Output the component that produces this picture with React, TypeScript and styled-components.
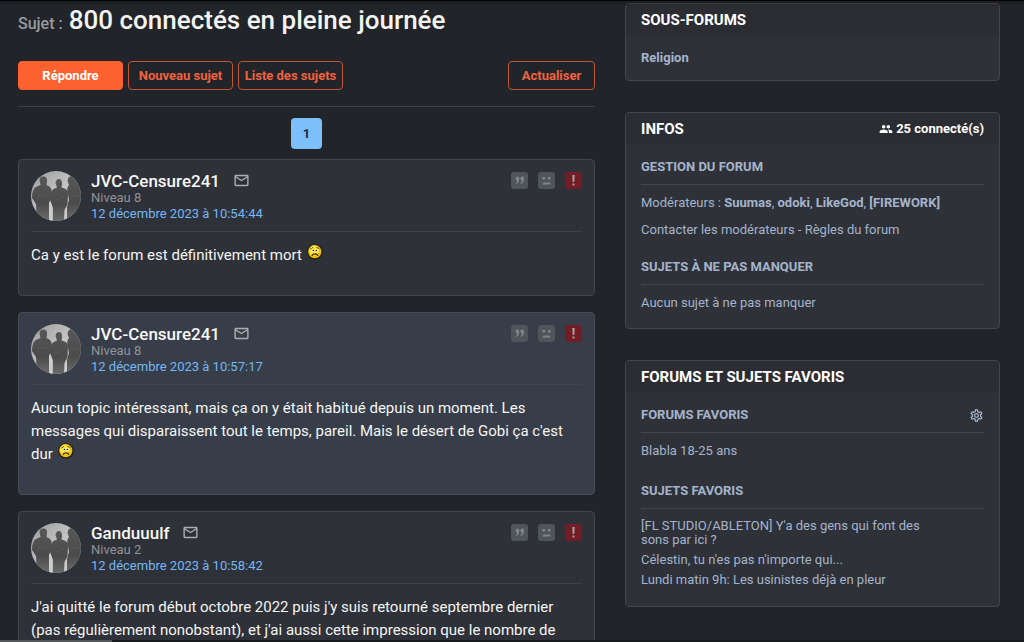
import React from "react";
import styled, { createGlobalStyle } from "styled-components";
import { MdMailOutline, MdPeople, MdOutlineSettings } from "react-icons/md";

const GlobalStyle = createGlobalStyle`
  *, *::before, *::after { box-sizing: border-box; }
  html { scrollbar-width: none; background: #212429; }
  body {
    margin: 0;
    background: #212429;
    color: #f2f2f2;
    font-family: Roboto, "Liberation Sans", sans-serif;
    font-size: 13px;
    line-height: 20px;
  }
  h1, h2, h3, p, ul { margin: 0; padding: 0; }
  ul { list-style: none; }
  a { color: inherit; text-decoration: none; }
  button { font-family: inherit; cursor: pointer; }
`;

const HeaderEdge = styled.div`
  position: fixed;
  inset: 0 0 auto 0;
  height: 1px;
  background: #030304;
  box-shadow: 0 0 5px 1px rgba(0, 0, 0, 0.5);
`;

const StatusEdge = styled.div`
  position: fixed;
  inset: auto 0 0 0;
  height: 2px;
  background: linear-gradient(90deg, #55565a 112px, #17191c 112px);
`;

const Page = styled.div`
  display: grid;
  grid-template-columns: minmax(0, 1fr) 375px;
  gap: 30px;
  align-items: start;
  padding: 3px 24px 0 18px;
`;

const Title = styled.h1`
  display: flex;
  align-items: baseline;
  gap: 6px;
  color: #f4f4f4;
  font-size: 26px;
  font-weight: 500;
  line-height: 34px;
`;

const TitleLabel = styled.span`
  color: #999b9f;
  font-size: 16px;
`;

const Toolbar = styled.div`
  display: flex;
  gap: 5px;
  margin-top: 20px;
  padding-bottom: 16px;
  border-bottom: 1px solid #3d4046;
`;

const Button = styled.button<{ $primary?: boolean; $end?: boolean }>`
  height: 29px;
  min-width: ${(p) => (p.$end ? "87px" : "105px")};
  margin-left: ${(p) => (p.$end ? "auto" : "0")};
  padding: 0 5px;
  border: 1px solid ${(p) => (p.$primary ? "#fc612f" : "#c35539")};
  border-radius: 4px;
  background: ${(p) => (p.$primary ? "#fc612f" : "transparent")};
  color: ${(p) => (p.$primary ? "#fff" : "#f0623f")};
  font-size: 13px;
  font-weight: 700;
`;

const Pagination = styled.nav`
  display: flex;
  justify-content: center;
  padding: 11px 0 10px;
`;

const PageLink = styled.a`
  display: flex;
  align-items: center;
  justify-content: center;
  width: 31px;
  height: 31px;
  border-radius: 4px;
  background: #7cc0fb;
  color: #1d2b38;
  font-weight: 700;
`;

const Messages = styled.div`
  display: flex;
  flex-direction: column;
  gap: 16px;
`;

const Card = styled.article<{ $alt?: boolean }>`
  padding: 11px 12px 28px;
  border: 1px solid ${(p) => (p.$alt ? "#464c55" : "#42454b")};
  border-radius: 4px;
  background: ${(p) => (p.$alt ? "#373e49" : "#2e3138")};
`;

const CardHeader = styled.header<{ $alt?: boolean }>`
  display: flex;
  gap: 10px;
  padding-bottom: 9px;
  border-bottom: 1px solid ${(p) => (p.$alt ? "#414750" : "#3d4046")};
`;

const AvatarFrame = styled.svg`
  flex: none;
  width: 50px;
  height: 50px;
  border-radius: 50%;
`;

const Identity = styled.div`
  display: flex;
  flex: 1;
  flex-direction: column;
`;

const NameRow = styled.div`
  display: flex;
  align-items: center;
  gap: 13px;
  height: 19px;
`;

const Name = styled.a`
  color: #f7f7f7;
  font-size: 17px;
  font-weight: 500;
`;

const MailLink = styled.a`
  display: flex;
  color: #aaacb0;
  font-size: 17px;
`;

const Level = styled.span`
  color: #909297;
  line-height: 16px;
`;

const DateLink = styled.a`
  color: #75b7f2;
  line-height: 16px;
`;

const Actions = styled.div`
  display: flex;
  gap: 10px;
  padding-top: 1px;
`;

const Action = styled.button<{ $danger?: boolean }>`
  width: 17px;
  height: 17px;
  padding: 0;
  border: 0;
  border-radius: 3px;
  background: ${(p) => (p.$danger ? "#721d25" : "#50545b")};
  color: ${(p) => (p.$danger ? "#aaa0a2" : "#80848b")};

  svg { display: block; }
`;

const Body = styled.p`
  margin-top: 12px;
  color: #f5f5f5;
  font-size: 15px;
  line-height: 23px;
`;

const Smiley = styled.svg`
  width: 16px;
  height: 16px;
  margin-left: 1px;
  vertical-align: 0;
`;

const Sidebar = styled.aside`
  display: flex;
  flex-direction: column;
  gap: 31px;
`;

const Panel = styled.section`
  overflow: hidden;
  border: 1px solid #42454b;
  border-radius: 4px;
  background: #2e3138;
  color: #a5b4cb;
`;

const PanelHeader = styled.header`
  display: flex;
  align-items: center;
  justify-content: space-between;
  height: 31px;
  padding: 0 15px;
  background: #2b2d33;
  color: #fff;
`;

const PanelTitle = styled.h2`
  font-size: 15px;
  font-weight: 700;
  text-transform: uppercase;
`;

const Connected = styled.a`
  display: flex;
  align-items: center;
  gap: 3px;
  font-weight: 700;

  svg { font-size: 14px; }
`;

const PanelBody = styled.div<{ $gap?: number; $end: number }>`
  display: flex;
  flex-direction: column;
  gap: ${(p) => p.$gap ?? 0}px;
  padding: 13px 15px ${(p) => p.$end}px;
`;

const GroupHeader = styled.header`
  display: flex;
  align-items: center;
  justify-content: space-between;
  margin-bottom: 8px;
  padding-bottom: 7px;
  border-bottom: 1px solid #42464d;
`;

const GroupTitle = styled.h3`
  font-size: 13px;
  font-weight: 700;
  line-height: 20px;
  text-transform: uppercase;
`;

const SettingsButton = styled.button`
  display: flex;
  padding: 0;
  border: 0;
  background: none;
  color: inherit;
`;

const Line = styled.p`
  & + & { margin-top: 7px; }
`;

const StrongLink = styled.a`
  font-weight: 700;
`;

const Topics = styled.ul`
  display: flex;
  flex-direction: column;
  gap: 6px;
  max-width: 300px;
  padding-top: 2px;
  line-height: 14px;
`;

function Avatar() {
  return (
    <AvatarFrame viewBox="0 0 50 50" role="img" aria-label="Avatar">
      <defs>
        <linearGradient id="sky" x1="0" y1="0" x2="1" y2="1">
          <stop offset="0" stopColor="#999" />
          <stop offset=".5" stopColor="#c5c5c5" />
          <stop offset="1" stopColor="#aaa" />
        </linearGradient>
        <linearGradient id="cloth" x1="0" y1="0" x2="0" y2="1">
          <stop offset="0" stopColor="#575757" />
          <stop offset=".6" stopColor="#4b4b4b" />
          <stop offset="1" stopColor="#6b6b6b" />
        </linearGradient>
      </defs>
      <rect width="50" height="50" fill="url(#sky)" />
      <g fill="url(#cloth)">
        <path d="M8.500 9.500Q8.500 5.500 12.500 5.500T16 10.500L15.500 14Q20 15.500 20.500 19L20 27 18 32V50H6L5 33 1 27Q1 17 6 15.500L9.500 14Z" />
        <path d="M24.500 12Q25 8 28 8T31 12.500L30.500 16.500Q36 17.500 37 21L36.500 33 34 38V50H22V37L19.500 30 18 27.500 20.500 20Q22 17.500 26 16.500Z" />
        <path d="M36.500 10Q37 5 41 5L50 6V50H36V36L38 29 36.500 21Q35.500 17 38 14Z" />
      </g>
      <path d="M18 32 21 34V50H18ZM33.500 39 36 36V50H33Z" fill="#cdcdcd" />
      <path d="M7 25Q11 22 16 25M23 28Q28 30 33 26M39 24Q43 27 48 24" fill="none" stroke="#5e5e5e" strokeWidth=".7" />
    </AvatarFrame>
  );
}

function SadFace() {
  return (
    <Smiley viewBox="0 0 16 16" role="img" aria-label="Triste">
      <circle cx="8" cy="8" r="7.800" fill="#2a2205" />
      <circle cx="7.800" cy="7.600" r="6.600" fill="#e9c013" />
      <ellipse cx="7" cy="6.500" rx="5" ry="5" fill="#fbe23a" />
      <path d="M3.200 5.200 6 3.400M9.300 3.200l2.900 1.500" stroke="#604900" strokeWidth=".9" />
      <ellipse cx="5.800" cy="6.600" rx="1.500" ry="1.600" fill="#fff8c0" />
      <ellipse cx="9.800" cy="6.600" rx="1.500" ry="1.600" fill="#fff8c0" />
      <circle cx="6.300" cy="6.500" r=".8" fill="#1b1600" />
      <circle cx="9.400" cy="6.500" r=".8" fill="#1b1600" />
      <path d="M4.900 11.800Q5.500 9.800 8 9.800T11 11.800" fill="none" stroke="#4c3500" strokeWidth="1.200" />
    </Smiley>
  );
}

interface MessageProps {
  author: string;
  level: number;
  date: string;
  alt?: boolean;
  children: React.ReactNode;
}

function Message({ author, level, date, alt, children }: MessageProps) {
  return (
    <Card $alt={alt}>
      <CardHeader $alt={alt}>
        <Avatar />
        <Identity>
          <NameRow>
            <Name href="#">{author}</Name>
            <MailLink href="#" aria-label="Envoyer un message privé"><MdMailOutline /></MailLink>
          </NameRow>
          <Level>Niveau {level}</Level>
          <DateLink href="#">{date}</DateLink>
        </Identity>
        <Actions>
          <Action aria-label="Citer">
            <svg width="17" height="17" viewBox="0 0 17 17" fill="currentColor">
              <path d="M4.500 6.500a1.900 1.900 0 1 1 3.800 0Q8.300 10.500 5.200 12L4.700 11.200Q6.200 10 6.200 8.400 4.500 8.200 4.500 6.500ZM9.300 6.500a1.900 1.900 0 1 1 3.800 0Q13.100 10.500 10 12L9.500 11.200Q11 10 11 8.400 9.300 8.200 9.300 6.500Z" />
            </svg>
          </Action>
          <Action aria-label="Ignorer">
            <svg width="17" height="17" viewBox="0 0 17 17" fill="currentColor">
              <path d="M4.500 5h2.500v2.500H4.500ZM10 5h2.500v2.500H10ZM4.500 12.500Q4.500 10.500 6 10.500h5q1.500 0 1.500 2Z" />
            </svg>
          </Action>
          <Action $danger aria-label="Signaler">
            <svg width="17" height="17" viewBox="0 0 17 17" fill="currentColor">
              <path d="M7.300 3h2.400l-.4 7H7.700ZM7.500 11.500h2v2h-2Z" />
            </svg>
          </Action>
        </Actions>
      </CardHeader>
      <Body>{children}</Body>
    </Card>
  );
}

export default function App() {
  return (
    <>
      <GlobalStyle />
      <Page>
        <main>
          <Title><TitleLabel>Sujet :</TitleLabel> 800 connectés en pleine journée</Title>
          <Toolbar>
            <Button $primary>Répondre</Button>
            <Button>Nouveau sujet</Button>
            <Button>Liste des sujets</Button>
            <Button $end>Actualiser</Button>
          </Toolbar>
          <Pagination aria-label="Pages"><PageLink href="#">1</PageLink></Pagination>
          <Messages>
            <Message author="JVC-Censure241" level={8} date="12 décembre 2023 à 10:54:44">
              Ca y est le forum est définitivement mort <SadFace />
            </Message>
            <Message alt author="JVC-Censure241" level={8} date="12 décembre 2023 à 10:57:17">
              Aucun topic intéressant, mais ça on y était habitué depuis un moment. Les messages qui
              disparaissent tout le temps, pareil. Mais le désert de Gobi ça c'est dur <SadFace />
            </Message>
            <Message author="Ganduuulf" level={2} date="12 décembre 2023 à 10:58:42">
              J'ai quitté le forum début octobre 2022 puis j'y suis retourné septembre dernier (pas
              régulièrement nonobstant), et j'ai aussi cette impression que le nombre de
            </Message>
          </Messages>
        </main>
        <Sidebar>
          <Panel>
            <PanelHeader><PanelTitle>Sous-forums</PanelTitle></PanelHeader>
            <PanelBody $end={12}><Line><StrongLink href="#">Religion</StrongLink></Line></PanelBody>
          </Panel>
          <Panel>
            <PanelHeader>
              <PanelTitle>Infos</PanelTitle>
              <Connected href="#"><MdPeople />25 connecté(s)</Connected>
            </PanelHeader>
            <PanelBody $gap={17} $end={15}>
              <section>
                <GroupHeader><GroupTitle>Gestion du forum</GroupTitle></GroupHeader>
                <Line>
                  Modérateurs : <StrongLink href="#">Suumas</StrongLink>, <StrongLink href="#">odoki</StrongLink>,{" "}
                  <StrongLink href="#">LikeGod</StrongLink>, <StrongLink href="#">[FIREWORK]</StrongLink>
                </Line>
                <Line><a href="#">Contacter les modérateurs</a> - <a href="#">Règles du forum</a></Line>
              </section>
              <section>
                <GroupHeader><GroupTitle>Sujets à ne pas manquer</GroupTitle></GroupHeader>
                <Line>Aucun sujet à ne pas manquer</Line>
              </section>
            </PanelBody>
          </Panel>
          <Panel>
            <PanelHeader><PanelTitle>Forums et sujets favoris</PanelTitle></PanelHeader>
            <PanelBody $gap={20} $end={19}>
              <section>
                <GroupHeader>
                  <GroupTitle>Forums favoris</GroupTitle>
                  <SettingsButton aria-label="Gérer les favoris"><MdOutlineSettings size={15} /></SettingsButton>
                </GroupHeader>
                <Line><a href="#">Blabla 18-25 ans</a></Line>
              </section>
              <section>
                <GroupHeader><GroupTitle>Sujets favoris</GroupTitle></GroupHeader>
                <Topics>
                  <li><a href="#">[FL STUDIO/ABLETON] Y'a des gens qui font des sons par ici ?</a></li>
                  <li><a href="#">Célestin, tu n'es pas n'importe qui...</a></li>
                  <li><a href="#">Lundi matin 9h: Les usinistes déjà en pleur</a></li>
                </Topics>
              </section>
            </PanelBody>
          </Panel>
        </Sidebar>
      </Page>
      <HeaderEdge />
      <StatusEdge />
    </>
  );
}
